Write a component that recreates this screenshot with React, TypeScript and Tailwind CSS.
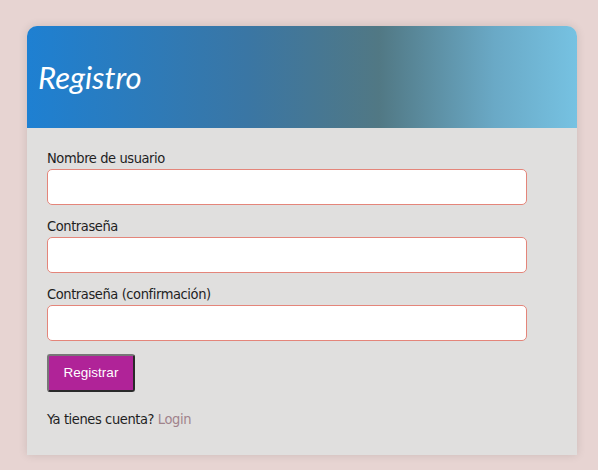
export default function App() {
  const fields = ["Nombre de usuario", "Contraseña", "Contraseña (confirmación)"];

  return (
    <div className="min-h-[470px] w-full bg-[#e7d4d2] pl-[27px] pt-[26px]">
      <div className="w-[550px] overflow-hidden rounded-t-[10px] bg-[#e0dfde] shadow-[0_0_10px_rgba(0,0,0,0.12)]">
        {/* Header */}
        <div className="flex h-[102px] items-center bg-[linear-gradient(to_right,#1e80d2_0%,#3a76a4_40%,#517884_64%,#6aa9c6_85%,#76c2e2_100%)] pl-[11px]">
          <h1
            className="text-[31px] italic leading-none text-white"
            style={{ fontFamily: "Lato, 'Open Sans', sans-serif" }}
          >
            Registro
          </h1>
        </div>

        {/* Body */}
        <div
          className="px-[20px] pb-[26px] pt-[20px] text-[14.5px] tracking-[-0.4px] font-stretch-condensed text-[#1e1e1e]"
          style={{ fontFamily: "'DejaVu Sans Condensed', 'DejaVu Sans', sans-serif" }}
        >
          {fields.map((label) => (
            <div key={label} className="mb-[11px]">
              <label className="block h-[21px] leading-[21px]">{label}</label>
              <input
                type={label === "Nombre de usuario" ? "text" : "password"}
                className="block h-[36px] w-[480px] rounded-[5px] border border-[#e4857a] bg-white px-2 outline-none"
              />
            </div>
          ))}

          <button
            type="button"
            className="mt-[2px] h-[38px] w-[88px] rounded-[3px] border-2 border-t-[#777] border-l-[#777] border-b-[#2a2a2a] border-r-[#2a2a2a] bg-[#b02398] text-[13.5px] tracking-normal text-white"
            style={{ fontFamily: "'Liberation Sans', Arial, sans-serif" }}
          >
            Registrar
          </button>

          <p className="mt-[17px] leading-[20px]">
            Ya tienes cuenta? <a className="text-[#a0838c]">Login</a>
          </p>
        </div>
      </div>
    </div>
  );
}
